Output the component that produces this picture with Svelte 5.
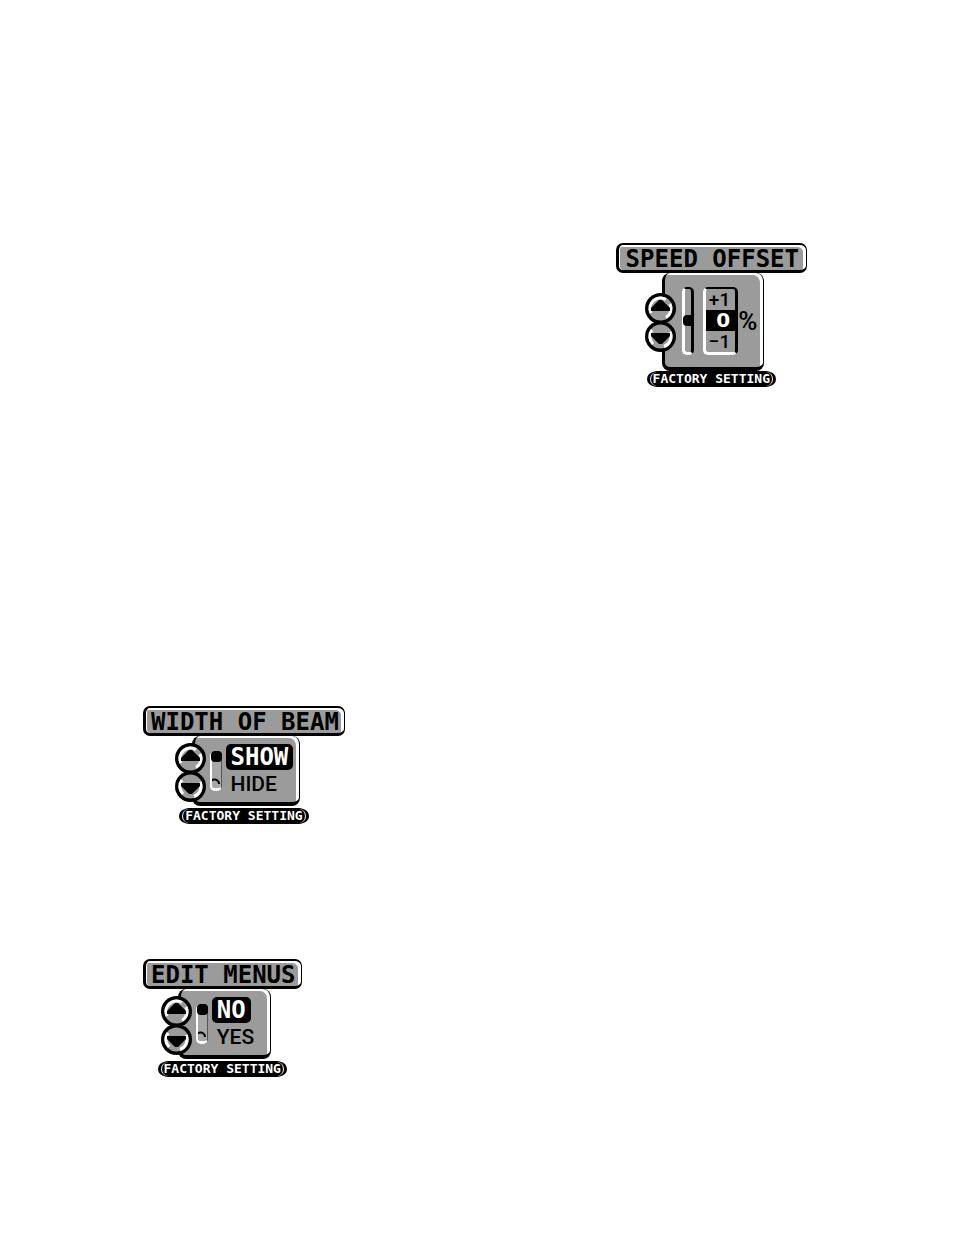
<script lang="ts">
  interface Menu {
    id: string;
    title: string;
    options: string[];
    selected: number;
    unit?: string;
  }

  const menus: Menu[] = $state([
    { id: 'speed', title: 'SPEED OFFSET', options: ['+1', '0', '−1'], selected: 1, unit: '%' },
    { id: 'beam', title: 'WIDTH OF BEAM', options: ['SHOW', 'HIDE'], selected: 0 },
    { id: 'edit', title: 'EDIT MENUS', options: ['NO', 'YES'], selected: 0 },
  ]);

  // delta: -1 = up, +1 = down
  function step(menu: Menu, delta: number): void {
    const next = menu.selected + delta;
    if (next >= 0 && next < menu.options.length) menu.selected = next;
  }
</script>

{#snippet arrow(down: boolean)}
  <svg width="31" height="31" viewBox="0 0 31 31" aria-hidden="true">
    <circle cx="15.5" cy="15.5" r="15.5" fill="#000" />
    <circle cx="15.5" cy="15.5" r="12" fill="#9b9b9b" />
    {#if down}
      <path d="M8 23A10.500 10.500 0 0 1 7 9M25 11A10.500 10.500 0 0 1 19 25.500" fill="none" stroke="#fff" stroke-width="3" />
      <path d="M6 12H25V15L17 23H14L6 15Z" fill="#000" />
    {:else}
      <path d="M6 20A10.500 10.500 0 0 1 21 6.500M25 11A10.500 10.500 0 0 1 21 24.500" fill="none" stroke="#fff" stroke-width="3" />
      <path d="M14 7H17L25 15V18H6V15Z" fill="#000" />
    {/if}
  </svg>
{/snippet}

<main>
  {#each menus as menu (menu.id)}
    <section class="menu {menu.id}">
      <h2>{menu.title}</h2>
      <div class="panel">
        <div class="arrows">
          <button type="button" aria-label="Up" onclick={() => step(menu, -1)}>
            {@render arrow(false)}
          </button>
          <button type="button" aria-label="Down" onclick={() => step(menu, 1)}>
            {@render arrow(true)}
          </button>
        </div>
        <input
          class="slider"
          type="range"
          min="0"
          max={menu.options.length - 1}
          bind:value={menu.selected}
          aria-label={menu.title}
        />
        <div class="options">
          {#each menu.options as option, i}
            <button
              type="button"
              class="option"
              class:selected={i === menu.selected}
              onclick={() => (menu.selected = i)}
            >{option}</button>
          {/each}
        </div>
        {#if menu.unit}
          <span class="unit">{menu.unit}</span>
        {/if}
      </div>
      <p class="note">FACTORY SETTING</p>
    </section>
  {/each}
</main>

<style>
  :global(body) {
    margin: 0;
    background: #fff;
  }

  main {
    display: flex;
    flex-direction: column;
    align-items: flex-start;
    padding: 243px 147px 160px 143px;
    color: #000;
  }

  .menu {
    display: flex;
    flex-direction: column;
    align-items: center;
  }

  .menu.speed {
    align-self: flex-end;
    margin-bottom: 320px;
  }

  .menu.beam {
    margin-bottom: 136px;
  }

  h2 {
    box-sizing: border-box;
    height: 30px;
    margin: 0;
    padding: 0 5px;
    border: solid #000;
    border-width: 2px 1px 3px 3px;
    border-radius: 7px;
    background: #9b9b9b;
    box-shadow: inset -3px 2px 0 #fff, inset 1px 0 0 #fff;
    font: bold 24px/28px 'DejaVu Sans Mono', monospace;
    white-space: pre;
  }

  .speed h2 {
    padding: 0 7px;
  }

  .panel {
    box-sizing: border-box;
    display: flex;
    align-items: center;
    height: 70px;
    margin-left: 4px;
    padding: 3px 6px 0 0;
    border: solid #000;
    border-width: 0 1px 4px 3px;
    border-radius: 8px;
    background: #9b9b9b;
    box-shadow: inset -3px 2px 0 #fff;
  }

  .speed .panel {
    height: 98px;
    padding: 2px 6px 0 0;
  }

  .arrows {
    display: flex;
    flex-direction: column;
    margin: 0 4px 0 -20px;
  }

  .speed .arrows {
    margin-right: 6px;
  }

  button {
    padding: 0;
    border: 0;
    background: none;
    color: inherit;
    cursor: pointer;
  }

  .arrows button {
    height: 28px;
  }

  .arrows svg {
    display: block;
  }

  .slider {
    appearance: none;
    box-sizing: border-box;
    writing-mode: vertical-lr;
    width: 12px;
    height: 40px;
    margin: 0 4px 0 0;
    border: solid #fff;
    border-width: 0 1px 3px 2px;
    border-right-color: #555;
    border-radius: 5px;
    background: radial-gradient(circle at 4px 33px, transparent 3px, #000 4px, #000 5px, transparent 6px) top / 12px 33px no-repeat #a8a8a8;
  }

  .slider::-webkit-slider-thumb {
    appearance: none;
    width: 11px;
    height: 11px;
    border-radius: 4px;
    background: #000;
  }

  .speed .slider {
    height: 68px;
    margin-right: 9px;
    border-width: 2px 3px 3px;
    border-color: #000 #000 #fff #fff;
    background: #9b9b9b;
  }

  .options {
    display: flex;
    flex-direction: column;
    align-items: flex-start;
    gap: 1px;
    min-width: 52px;
  }

  .option {
    height: 26px;
    padding: 0 5px;
    font: 500 21px/26px Roboto, sans-serif;
  }

  .option.selected {
    border-radius: 5px;
    background: #000;
    color: #fff;
    font: bold 24px/26px 'DejaVu Sans Mono', monospace;
  }

  .speed .options {
    box-sizing: border-box;
    align-items: stretch;
    gap: 0;
    width: 35px;
    height: 68px;
    min-width: 0;
    border: solid;
    border-width: 2px 3px 3px;
    border-color: #000 #000 #fff #fff;
    border-radius: 5px;
  }

  .speed .option {
    height: 21px;
    padding: 0 5px 0 0;
    font-size: 19px;
    line-height: 21px;
    text-align: right;
  }

  .speed .option.selected {
    border-radius: 0;
    font: bold 20px/21px 'DejaVu Sans', sans-serif;
  }

  .unit {
    font: 500 26px/26px Roboto, sans-serif;
  }

  .note {
    height: 14px;
    margin: 3px 0 0;
    padding: 0 2px;
    border: solid #fff;
    border-width: 0 1px;
    border-radius: 7px;
    background: #000;
    box-shadow: 0 0 0 1px #000, 3px 0 0 #000, -3px 0 0 #000;
    color: #fff;
    font: bold 13px/14px 'DejaVu Sans Mono', monospace;
  }

  .speed .note {
    margin-top: 1px;
  }
</style>
